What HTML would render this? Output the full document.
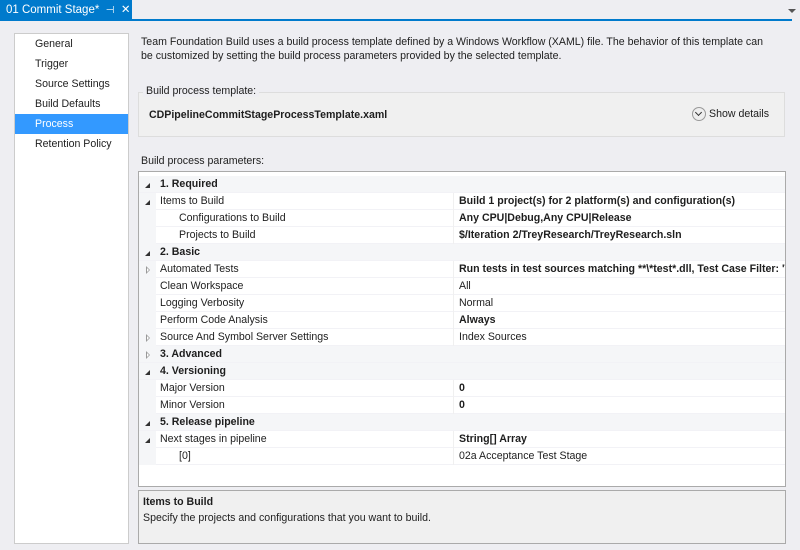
<!DOCTYPE html>
<html><head><meta charset="utf-8"><style>
*{margin:0;padding:0;box-sizing:border-box}
body{width:800px;height:550px;background:#eeeef2;font-family:"Liberation Sans",sans-serif;font-size:10.6px;color:#1e1e1e;position:relative;overflow:hidden}
.tab{position:absolute;left:0;top:0;width:132px;height:20px;background:#007acc;color:#fff;font-size:11.5px;line-height:20px;padding-left:6px;white-space:nowrap}
.tabline{position:absolute;left:0;top:19px;width:792px;height:2px;background:#007acc}
.dd{position:absolute;left:788px;top:9px;width:0;height:0;border-left:4px solid transparent;border-right:4px solid transparent;border-top:4px solid #555}
.nav{position:absolute;left:14px;top:33px;width:115px;height:511px;background:#fff;border:1px solid #ccc}
.nav div{height:20px;line-height:20px;padding-left:20px}
.nav .sel{background:#3399ff;color:#fff}
.intro{position:absolute;left:141px;top:35px;line-height:14px;width:655px;white-space:nowrap}
.tpl{position:absolute;left:138px;top:92px;width:647px;height:45px;border:1px solid #ddd;background:#f0f0f0}
.tpllbl{position:absolute;left:143px;top:85px;background:#eeeef2;padding:0 3px}
.tplname{position:absolute;left:149px;top:109px;font-weight:bold}
.sd{position:absolute;left:692px;top:107px;display:flex;align-items:center;white-space:pre}
.sd i{width:14px;height:14px;border-radius:50%;border:1px solid #999;background:#eee;margin-right:3px;display:inline-block;position:relative}
.sd i:after{content:"";position:absolute;left:3px;top:2px;width:4px;height:4px;border-right:1.5px solid #333;border-bottom:1.5px solid #333;transform:rotate(45deg)}
.bpp{position:absolute;left:141px;top:155px}
.grid{position:absolute;left:138px;top:171px;width:648px;height:316px;border:1px solid #aaa;background:#fff;overflow:hidden}
.row{position:absolute;left:0;width:646px;height:17px;line-height:17px;border-bottom:1px solid #f2f2f6}
.row .g{position:absolute;left:0;top:0;width:17px;height:17px;background:#f5f6f8}
.row .n{position:absolute;left:21px;top:0}
.row .v{position:absolute;left:314px;top:0;padding-left:5px;border-left:1px solid #f0f0f0;height:17px;white-space:nowrap}
.row.cat{background:#f5f6f8;font-weight:bold}
.ex{position:absolute;left:6px;top:7px;width:0;height:0;border-left:5px solid transparent;border-bottom:5px solid #333}
.co{position:absolute;left:7px;top:5px;width:0;height:0;border-top:4px solid transparent;border-bottom:4px solid transparent;border-left:4px solid #999}
.co:after{content:"";position:absolute;left:-3px;top:-2px;border-top:2px solid transparent;border-bottom:2px solid transparent;border-left:2px solid #fff}
b{font-weight:bold}
.desc{position:absolute;left:138px;top:490px;width:648px;height:54px;border:1px solid #aaa;background:#f0f0f0;padding:3px 4px;line-height:16px}
</style></head><body>
<div class="tab">01 Commit Stage* &nbsp;<span style="font-size:10px">⊣</span>&nbsp; ✕</div>
<div class="tabline"></div>
<div class="dd"></div>
<div class="nav">
<div>General</div><div>Trigger</div><div>Source Settings</div><div>Build Defaults</div><div class="sel">Process</div><div>Retention Policy</div>
</div>
<div class="intro">Team Foundation Build uses a build process template defined by a Windows Workflow (XAML) file. The behavior of this template can<br>be customized by setting the build process parameters provided by the selected template.</div>
<div class="tpl"></div>
<div class="tpllbl">Build process template:</div>
<div class="tplname">CDPipelineCommitStageProcessTemplate.xaml</div>
<div class="sd"><i></i>Show details</div>
<div class="bpp">Build process parameters:</div>
<div class="grid">
<div class="row cat" style="top:4px"><span class="ex"></span><span class="n">1. Required</span></div>
<div class="row" style="top:21px"><span class="g"></span><span class="ex"></span><span class="n">Items to Build</span><span class="v"><b>Build 1 project(s) for 2 platform(s) and configuration(s)</b></span></div>
<div class="row" style="top:38px"><span class="g"></span><span class="n" style="left:40px">Configurations to Build</span><span class="v"><b>Any CPU|Debug,Any CPU|Release</b></span></div>
<div class="row" style="top:55px"><span class="g"></span><span class="n" style="left:40px">Projects to Build</span><span class="v"><b>$/Iteration 2/TreyResearch/TreyResearch.sln</b></span></div>
<div class="row cat" style="top:72px"><span class="ex"></span><span class="n">2. Basic</span></div>
<div class="row" style="top:89px"><span class="g"></span><span class="co"></span><span class="n">Automated Tests</span><span class="v"><b>Run tests in test sources matching **\*test*.dll, Test Case Filter: 'Te</b></span></div>
<div class="row" style="top:106px"><span class="g"></span><span class="n">Clean Workspace</span><span class="v">All</span></div>
<div class="row" style="top:123px"><span class="g"></span><span class="n">Logging Verbosity</span><span class="v">Normal</span></div>
<div class="row" style="top:140px"><span class="g"></span><span class="n">Perform Code Analysis</span><span class="v"><b>Always</b></span></div>
<div class="row" style="top:157px"><span class="g"></span><span class="co"></span><span class="n">Source And Symbol Server Settings</span><span class="v">Index Sources</span></div>
<div class="row cat" style="top:174px"><span class="co"></span><span class="n">3. Advanced</span></div>
<div class="row cat" style="top:191px"><span class="ex"></span><span class="n">4. Versioning</span></div>
<div class="row" style="top:208px"><span class="g"></span><span class="n">Major Version</span><span class="v"><b>0</b></span></div>
<div class="row" style="top:225px"><span class="g"></span><span class="n">Minor Version</span><span class="v"><b>0</b></span></div>
<div class="row cat" style="top:242px"><span class="ex"></span><span class="n">5. Release pipeline</span></div>
<div class="row" style="top:259px"><span class="g"></span><span class="ex"></span><span class="n">Next stages in pipeline</span><span class="v"><b>String[] Array</b></span></div>
<div class="row" style="top:276px"><span class="g"></span><span class="n" style="left:40px">[0]</span><span class="v">02a Acceptance Test Stage</span></div>
</div>
<div class="desc"><b>Items to Build</b><br>Specify the projects and configurations that you want to build.</div>
</body></html>
